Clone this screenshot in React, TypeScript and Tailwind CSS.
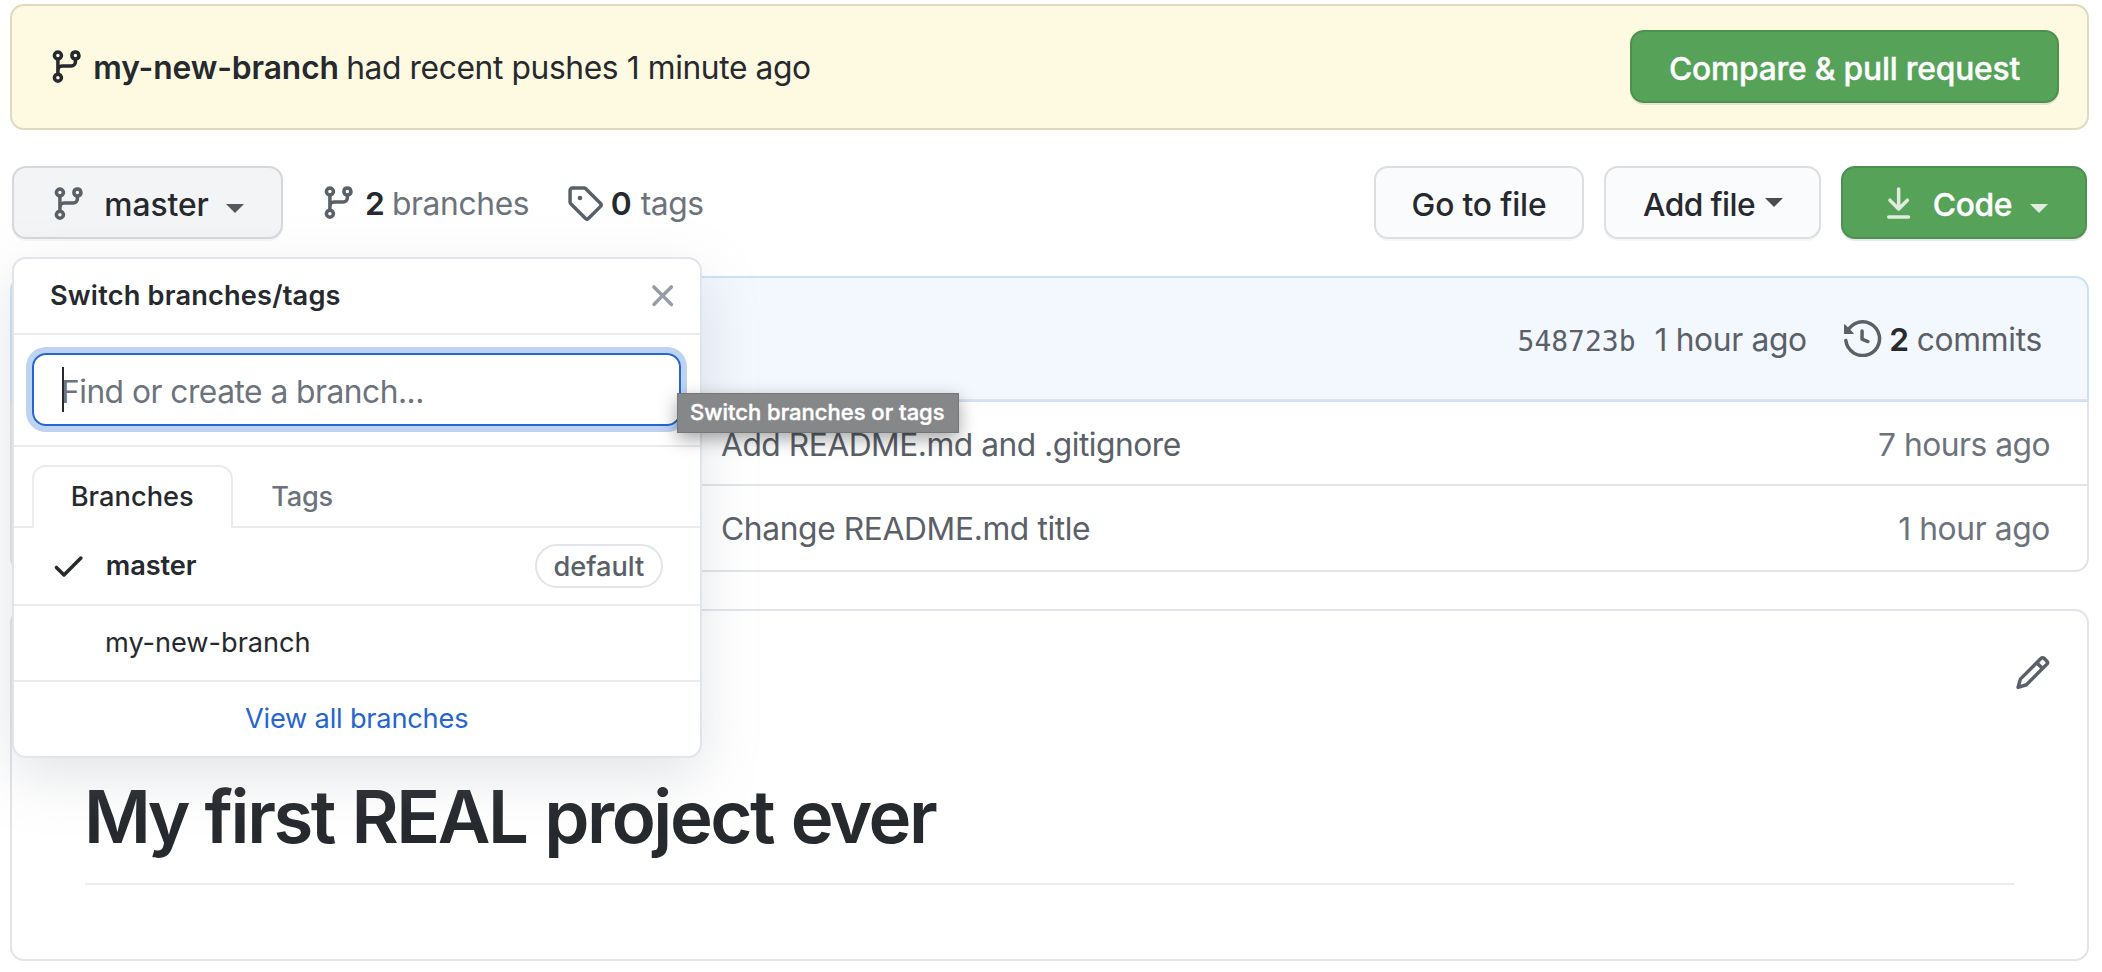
import React from "react";

const ICONS = {
  branch:
    "M11.75 2.5a.75.75 0 100 1.5.75.75 0 000-1.5zm-2.25.75a2.25 2.25 0 113 2.122V6A2.5 2.5 0 0110 8.5H6a1 1 0 00-1 1v1.128a2.251 2.251 0 11-1.5 0V5.372a2.25 2.25 0 111.5 0v1.836A2.492 2.492 0 016 7h4a1 1 0 001-1v-.628A2.25 2.25 0 019.5 3.25zM4.25 12a.75.75 0 100 1.5.75.75 0 000-1.5zM3.5 3.25a.75.75 0 111.5 0 .75.75 0 01-1.5 0z",
  tag: "M2.5 7.775V2.75a.25.25 0 01.25-.25h5.025a.25.25 0 01.177.073l6.25 6.25a.25.25 0 010 .354l-5.025 5.025a.25.25 0 01-.354 0l-6.25-6.25a.25.25 0 01-.073-.177zm-1.5 0V2.75C1 1.784 1.784 1 2.75 1h5.025c.464 0 .91.184 1.238.513l6.25 6.25a1.75 1.75 0 010 2.474l-5.026 5.026a1.75 1.75 0 01-2.474 0l-6.25-6.25A1.75 1.75 0 011 7.775zM6 5a1 1 0 100 2 1 1 0 000-2z",
  history:
    "M1.643 3.143L.427 1.927A.25.25 0 000 2.104V5.75c0 .138.112.25.25.25h3.646a.25.25 0 00.177-.427L2.715 4.215a6.5 6.5 0 11-1.18 4.458.75.75 0 10-1.493.154 8.001 8.001 0 101.6-5.684zM7.75 4a.75.75 0 01.75.75v2.992l2.028.812a.75.75 0 01-.557 1.392l-2.5-1A.75.75 0 017 8.25v-3.5A.75.75 0 017.75 4z",
  pencil:
    "M11.013 1.427a1.75 1.75 0 012.474 0l1.086 1.086a1.75 1.75 0 010 2.474l-8.61 8.61c-.21.21-.47.364-.756.445l-3.251.93a.75.75 0 01-.927-.928l.929-3.25a1.75 1.75 0 01.445-.758l8.61-8.61zm1.414 1.06a.25.25 0 00-.354 0L10.811 3.75l1.439 1.44 1.263-1.263a.25.25 0 000-.354l-1.086-1.086zM11.189 6.25L9.75 4.81l-6.286 6.287a.25.25 0 00-.064.108l-.558 1.953 1.953-.558a.249.249 0 00.108-.064l6.286-6.286z",
  x: "M3.72 3.72a.75.75 0 011.06 0L8 6.94l3.22-3.22a.75.75 0 111.06 1.06L9.06 8l3.22 3.22a.75.75 0 11-1.06 1.06L8 9.06l-3.22 3.22a.75.75 0 01-1.06-1.06L6.94 8 3.72 4.78a.75.75 0 010-1.06z",
  check:
    "M13.78 4.22a.75.75 0 010 1.06l-7.25 7.25a.75.75 0 01-1.06 0L2.22 9.28a.75.75 0 011.06-1.06L6 10.94l6.72-6.72a.75.75 0 011.06 0z",
  download:
    "M7.47 10.78a.75.75 0 001.06 0l3.75-3.75a.75.75 0 00-1.06-1.06L8.75 8.44V1.75a.75.75 0 00-1.5 0v6.69L4.78 5.97a.75.75 0 00-1.06 1.06l3.75 3.75zM3.75 13a.75.75 0 000 1.5h8.5a.75.75 0 000-1.5h-8.5z",
};

function Icon({ name, className = "" }: { name: keyof typeof ICONS; className?: string }) {
  return (
    <svg viewBox="0 0 16 16" fill="currentColor" aria-hidden="true" className={`size-[37.3px] shrink-0 ${className}`}>
      <path fillRule="evenodd" d={ICONS[name]} />
    </svg>
  );
}

function Caret({ className = "" }: { className?: string }) {
  return (
    <svg viewBox="0 0 18 9" fill="currentColor" aria-hidden="true" className={`h-[9px] w-[18px] shrink-0 ${className}`}>
      <path d="M0 0h18l-9 9z" />
    </svg>
  );
}

function PushBanner() {
  return (
    <section className="flex h-[126px] items-center rounded-[14px] border-2 border-[#dddabf] bg-[#fefae1] pr-[28px] pl-[36px]">
      <Icon name="branch" className="-mt-[1px]" />
      <p className="mt-[2px] ml-[8px] flex">
        <strong className="font-semibold tracking-[-0.12px]">my-new-branch</strong>
        <span className="ml-[7.3px] tracking-[-0.39px]">had recent pushes 1 minute ago</span>
      </p>
      <button className="-mt-px ml-auto flex h-[73px] w-[429px] items-center justify-center rounded-[14px] border-2 border-[#4c9150] bg-[#55a258] pt-[4px] font-medium tracking-[-0.2px] text-white shadow-[0_2px_0_rgba(27,31,35,0.1)] [-webkit-text-stroke:0.4px_white]">
        Compare &amp; pull request
      </button>
    </section>
  );
}

function Toolbar() {
  return (
    <div className="mt-[36px] mr-[2px] ml-[2px] flex h-[73px] items-center">
      <button className="flex h-[73px] w-[270.5px] items-center rounded-[14px] border-2 border-[#d5d7da] bg-[#f3f4f6] pt-[3px] pl-[36px] font-medium shadow-[0_2px_0_rgba(27,31,35,0.04)]">
        <Icon name="branch" className="text-[#5a6068]" />
        <span className="mt-[2px] ml-[17px] tracking-[-0.05px]">master</span>
        <Caret className="mt-[8px] ml-[17.5px] text-[#54585d]" />
      </button>
      <a className="ml-[37.3px] flex items-center">
        <Icon name="branch" className="text-[#5a6068]" />
        <strong className="mt-[2px] ml-[8px] font-semibold">2</strong>
        <span className="mt-[2px] ml-[7px] tracking-[-0.35px] text-[#6c737c]">branches</span>
      </a>
      <a className="ml-[37px] flex items-center">
        <Icon name="tag" className="text-[#5a6068]" />
        <strong className="mt-[2px] ml-[7.3px] font-semibold">0</strong>
        <span className="mt-[2px] ml-[9px] tracking-[-0.5px] text-[#6c737c]">tags</span>
      </a>
      <div className="ml-auto flex gap-[20px] font-medium">
        <button className="flex h-[73px] w-[210px] items-center justify-center rounded-[14px] border-2 border-[#dcdee0] bg-[#fafbfc] pt-[4px] pl-px tracking-[-0.15px] shadow-[0_2px_0_rgba(27,31,35,0.04)]">
          Go to file
        </button>
        <button className="flex h-[73px] w-[217.5px] items-center rounded-[14px] border-2 border-[#dcdee0] bg-[#fafbfc] pt-[4px] pl-[37.5px] tracking-[-0.6px] shadow-[0_2px_0_rgba(27,31,35,0.04)]">
          Add file
          <Caret className="mb-[4px] ml-[10px] text-[#494d51]" />
        </button>
        <button className="flex h-[73px] w-[246px] items-center rounded-[14px] border-2 border-[#4c9150] bg-[#55a258] pt-[3px] pl-[37px] text-white shadow-[0_2px_0_rgba(27,31,35,0.1)]">
          <Icon name="download" className="text-[#dfecde]" />
          <span className="mt-[2px] ml-[15.5px] tracking-[-0.4px] [-webkit-text-stroke:0.4px_white]">Code</span>
          <Caret className="mt-[8px] ml-[18px] text-[#dfecde]" />
        </button>
      </div>
    </div>
  );
}

const FILE_ROWS = [
  { message: "Add README.md and .gitignore", age: "7 hours ago" },
  { message: "Change README.md title", age: "1 hour ago" },
];

function FileBox() {
  return (
    <section className="mt-[37px]">
      <div className="h-[126px] rounded-t-[14px] border-x-2 border-t-2 border-b border-[#cde0fb] bg-[#f3f7fe]">
        <div className="flex h-[123px] items-center justify-end border-b-2 border-[#dde2e8] pt-[2px] pr-[45px] text-[#5a6068]">
          <div className="flex items-baseline">
            <code className="font-['DejaVu_Sans_Mono',monospace] text-[28px]">548723b</code>
            <span className="ml-[19px] tracking-[-0.35px]">1 hour ago</span>
          </div>
          <Icon name="history" className="-mt-[2px] ml-[37.6px]" />
          <strong className="ml-[7.7px] font-semibold text-[#26292d]">2</strong>
          <span className="ml-[7.7px] tracking-[-0.3px]">commits</span>
        </div>
      </div>
      <div className="rounded-b-[14px] border-x-2 border-b-2 border-[#e1e4e8]">
        {FILE_ROWS.map((row, i) => (
          <div
            key={row.message}
            className={`flex items-center justify-between pr-[37px] pl-[709px] ${
              i === 0 ? "h-[84px] border-b-2 border-[#e1e4e8] pt-[4px] tracking-[-0.5px]" : "h-[84px] pt-[2px] tracking-[-0.38px]"
            }`}
          >
            <span className="text-[#5a6068]">{row.message}</span>
            <span className="text-[#6c737c]">{row.age}</span>
          </div>
        ))}
      </div>
    </section>
  );
}

function Readme() {
  return (
    <section className="mt-[37px] flex h-[352px] flex-col rounded-[14px] border-2 border-[#e1e4e8]">
      <div className="flex justify-end pt-[42.5px] pr-[35.5px] text-[#5a6068]">
        <Icon name="pencil" />
      </div>
      <h1 className="mx-[73px] mt-[81px] h-[113px] border-b-2 border-[#e9ebee] text-[72.5px] leading-[90px] font-semibold tracking-[-2.45px] [word-spacing:1.7px]">
        <span className="-ml-px tracking-[-3.6px]">My</span> first REAL project ever
      </h1>
    </section>
  );
}

function BranchMenu() {
  return (
    <div className="absolute top-[257px] left-[12px] w-[689.5px] rounded-[14px] border-2 border-[#e1e4e8] bg-white text-[27.2px] shadow-[0_19px_56px_rgba(149,157,165,0.27)]">
      <header className="flex h-[76px] items-center justify-between border-b-2 border-[#eaebef] pr-[18px] pl-[36px] font-semibold tracking-[0.18px]">
        Switch branches/tags
        <Icon name="x" className="text-[#969da5]" />
      </header>
      <div className="h-[112px] border-b-2 border-[#eaebef] px-[18.3px] pt-[18.3px]">
        <div className="relative flex h-[72.5px] items-center rounded-[14px] border-2 border-[#2566cf] pt-[4px] pl-[26.7px] text-[31.75px] tracking-[-0.52px] text-[#6c737c] shadow-[0_0_0_6px_#bed3f2]">
          Find or create a branch...
          <span className="absolute top-[12px] left-[28px] h-[45px] w-[2px] bg-[#26292d]" />
        </div>
      </div>
      <div className="flex h-[81px] items-end font-medium">
        <div className="h-[63px] w-[18.2px] border-b-2 border-[#eaebef]" />
        <div className="flex h-[63px] w-[200.6px] items-center rounded-t-[14px] border-2 border-b-0 border-[#eaebef] pb-px pl-[36.5px] tracking-[0.05px]">
          Branches
        </div>
        <div className="flex h-[63px] flex-1 items-center border-b-2 border-[#eaebef] pt-[2px] pl-[38.5px] tracking-[-0.25px] text-[#6c737c]">
          Tags
        </div>
      </div>
      <div className="flex h-[78px] items-center border-b-2 border-[#eaebef] pr-[36.6px] pl-[36px]">
        <Icon name="check" />
        <span className="ml-[18.5px] font-semibold tracking-[-0.12px]">master</span>
        <span className="ml-auto flex h-[44px] w-[128px] items-center justify-center rounded-full border-2 border-[#e1e4e8] pt-px font-medium text-[#5a6068]">
          default
        </span>
      </div>
      <div className="flex h-[76px] items-center border-b-2 border-[#eaebef] pl-[91px] tracking-[-0.04px]">my-new-branch</div>
      <div className="flex h-[73.5px] items-center pl-[231px] tracking-[-0.2px] text-[#2465d0]">
        View all branches
      </div>
    </div>
  );
}

export default function App() {
  return (
    <main className="relative h-[972px] w-[2102px] overflow-hidden bg-white pt-[4px] pr-[13px] pl-[10px] font-['Inter',sans-serif] text-[31.75px] leading-[1.25] whitespace-nowrap text-[#26292d]">
      <PushBanner />
      <Toolbar />
      <FileBox />
      <Readme />
      <BranchMenu />
      <div className="absolute top-[393px] left-[677px] flex h-[40px] w-[282px] items-center border border-[#747678] bg-[#868788] pl-[12px] text-[22px] font-medium text-white shadow-[0_6px_18px_rgba(0,0,0,0.35)] [-webkit-text-stroke:0.4px_white]">
        Switch branches or tags
      </div>
    </main>
  );
}
